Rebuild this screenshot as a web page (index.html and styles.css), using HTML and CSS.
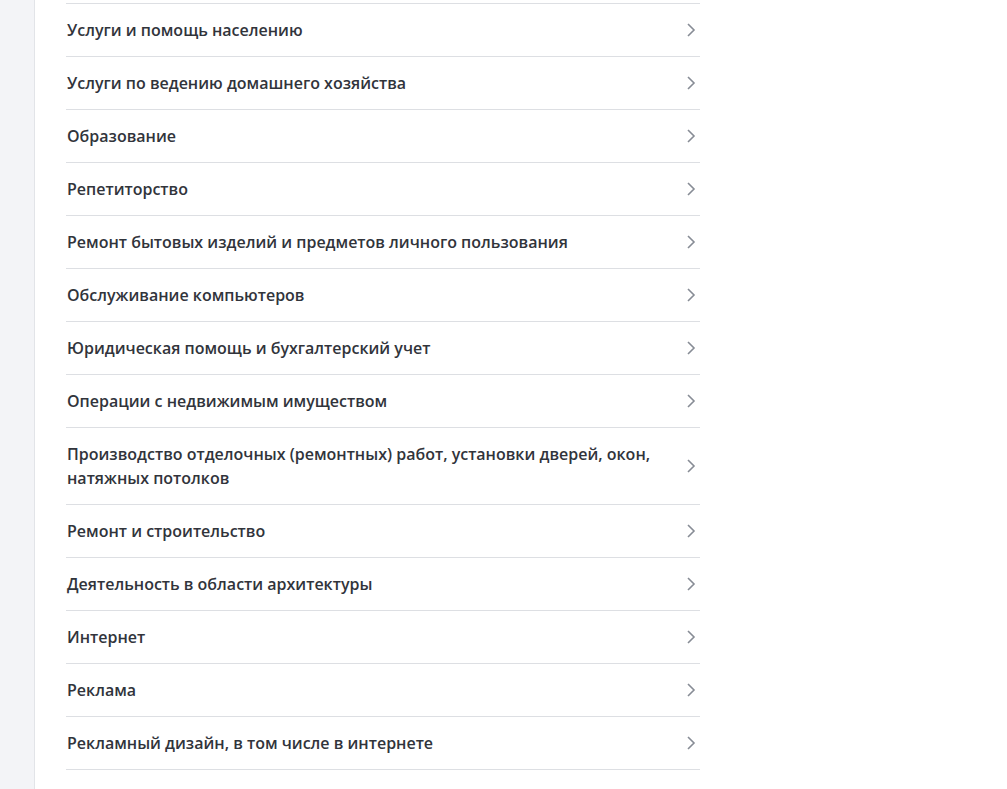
FILE: index.html
```html
<!DOCTYPE html>
<html lang="ru">
<head>
<meta charset="utf-8">
<link rel="stylesheet" href="styles.css">
</head>
<body>
<div class="layout">
  <aside class="sidebar"></aside>
  <main class="main">
    <ul class="list">
      <li class="item"><span class="label">Услуги и помощь населению</span><svg class="chev" viewBox="0 0 12 16"><path d="M3 2 L9 8 L3 14"/></svg></li>
      <li class="item"><span class="label">Услуги по ведению домашнего хозяйства</span><svg class="chev" viewBox="0 0 12 16"><path d="M3 2 L9 8 L3 14"/></svg></li>
      <li class="item"><span class="label">Образование</span><svg class="chev" viewBox="0 0 12 16"><path d="M3 2 L9 8 L3 14"/></svg></li>
      <li class="item"><span class="label">Репетиторство</span><svg class="chev" viewBox="0 0 12 16"><path d="M3 2 L9 8 L3 14"/></svg></li>
      <li class="item"><span class="label">Ремонт бытовых изделий и предметов личного пользования</span><svg class="chev" viewBox="0 0 12 16"><path d="M3 2 L9 8 L3 14"/></svg></li>
      <li class="item"><span class="label">Обслуживание компьютеров</span><svg class="chev" viewBox="0 0 12 16"><path d="M3 2 L9 8 L3 14"/></svg></li>
      <li class="item"><span class="label">Юридическая помощь и бухгалтерский учет</span><svg class="chev" viewBox="0 0 12 16"><path d="M3 2 L9 8 L3 14"/></svg></li>
      <li class="item"><span class="label">Операции с недвижимым имуществом</span><svg class="chev" viewBox="0 0 12 16"><path d="M3 2 L9 8 L3 14"/></svg></li>
      <li class="item"><span class="label">Производство отделочных (ремонтных) работ, установки дверей, окон, натяжных потолков</span><svg class="chev" viewBox="0 0 12 16"><path d="M3 2 L9 8 L3 14"/></svg></li>
      <li class="item"><span class="label">Ремонт и строительство</span><svg class="chev" viewBox="0 0 12 16"><path d="M3 2 L9 8 L3 14"/></svg></li>
      <li class="item"><span class="label">Деятельность в области архитектуры</span><svg class="chev" viewBox="0 0 12 16"><path d="M3 2 L9 8 L3 14"/></svg></li>
      <li class="item"><span class="label">Интернет</span><svg class="chev" viewBox="0 0 12 16"><path d="M3 2 L9 8 L3 14"/></svg></li>
      <li class="item"><span class="label">Реклама</span><svg class="chev" viewBox="0 0 12 16"><path d="M3 2 L9 8 L3 14"/></svg></li>
      <li class="item"><span class="label">Рекламный дизайн, в том числе в интернете</span><svg class="chev" viewBox="0 0 12 16"><path d="M3 2 L9 8 L3 14"/></svg></li>
    </ul>
  </main>
</div>
</body>
</html>
```

FILE: styles.css
```css
html, body {
  margin: 0;
  padding: 0;
  background: #ffffff;
}
body {
  font-family: "Open Sans", "Noto Sans", sans-serif;
  color: #31343b;
}
.layout {
  display: flex;
  min-height: 789px;
}
.sidebar {
  width: 34px;
  flex: none;
  background: #f3f4f7;
  border-right: 1px solid #e2e4e8;
}
.main {
  flex: 1;
  padding-left: 31px;
  padding-top: 3px;
}
.list {
  list-style: none;
  margin: 0;
  padding: 0;
  width: 634px;
  border-top: 1px solid #dddfe3;
}
.item {
  display: flex;
  align-items: center;
  justify-content: space-between;
  padding: 14px 0 14px 1px;
  border-bottom: 1px solid #dddfe3;
  font-size: 16px;
  line-height: 24px;
  font-weight: 600;
}
.label {
  max-width: 600px;
}
.chev {
  width: 12px;
  height: 16px;
  margin-right: 3px;
  flex: none;
  fill: none;
  stroke: #878c95;
  stroke-width: 1.6;
}
```
